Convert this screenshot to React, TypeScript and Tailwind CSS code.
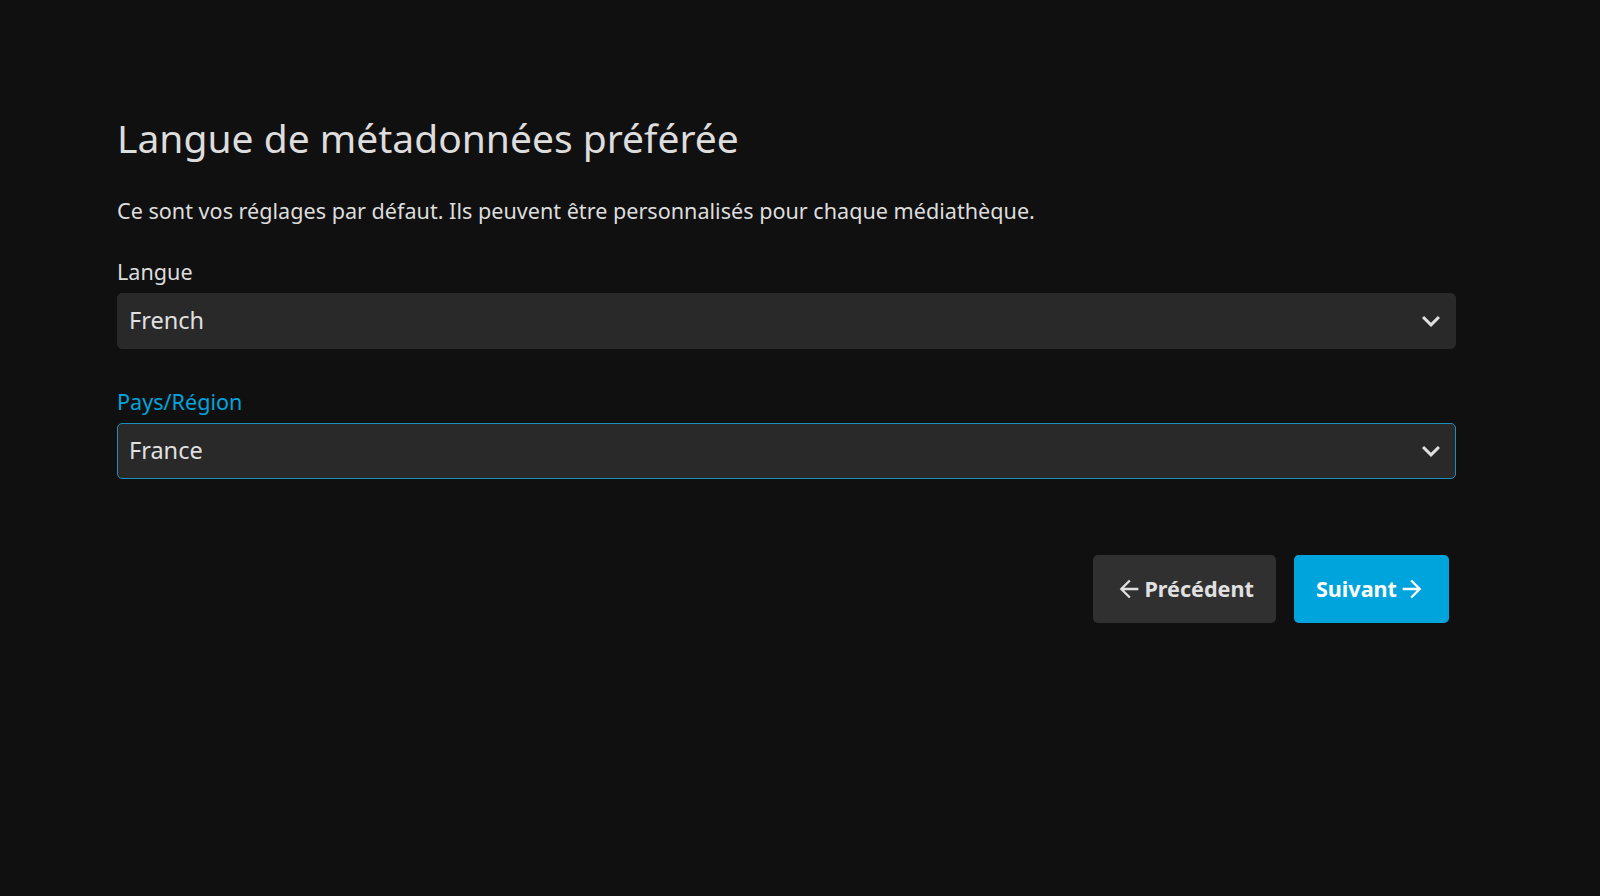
const font = { fontFamily: '"Noto Sans", "Open Sans", sans-serif' };

function Chevron() {
  return (
    <svg viewBox="0 0 24 24" className="h-[36px] w-[36px] fill-[#e0e0e0]">
      <path d="M16.59 8.59L12 13.17 7.41 8.59 6 10l6 6 6-6z" />
    </svg>
  );
}

function ArrowBack() {
  return (
    <svg viewBox="0 0 24 24" className="h-[28px] w-[28px] fill-current">
      <path d="M20 11H7.83l5.59-5.59L12 4l-8 8 8 8 1.41-1.41L7.83 13H20v-2z" />
    </svg>
  );
}

function ArrowForward() {
  return (
    <svg viewBox="0 0 24 24" className="h-[28px] w-[28px] fill-current">
      <path d="M12 4l-1.41 1.41L16.17 11H4v2h12.17l-5.58 5.59L12 20l8-8z" />
    </svg>
  );
}

function SelectField({ label, value, focused }: { label: string; value: string; focused?: boolean }) {
  return (
    <div className="flex flex-col">
      <label className={`text-[21.6px] leading-[30px] ${focused ? "text-[#00a4dc]" : "text-[#dddddd]"}`}>{label}</label>
      <div
        className={`mt-[6px] flex h-[56px] items-center justify-between rounded-[5px] border bg-[#292929] pl-[11px] pr-[6px] ${
          focused ? "border-[#1c8fba]" : "border-[#292929]"
        }`}
      >
        <span className="text-[23.5px] text-[#e0e0e0]">{value}</span>
        <Chevron />
      </div>
    </div>
  );
}

export default function App() {
  return (
    <div className="min-h-[896px] w-full bg-[#101010]" style={font}>
      <div className="ml-[117px] w-[1339px] pt-[112px]">
        <h1 className="text-[39px] leading-[52px] text-[#dddddd]">Langue de métadonnées préférée</h1>
        <p className="mt-[31px] text-[21.6px] leading-[32px] text-[#dddddd]">
          Ce sont vos réglages par défaut. Ils peuvent être personnalisés pour chaque médiathèque.
        </p>
        <div className="mt-[30px] flex flex-col gap-[38px]">
          <SelectField label="Langue" value="French" />
          <SelectField label="Pays/Région" value="France" focused />
        </div>
        <div className="mr-[7px] mt-[76px] flex justify-end gap-[18px]">
          <button className="flex h-[68px] items-center gap-[1px] rounded-[5px] bg-[#303030] pl-[22px] pr-[22px] text-[21.6px] font-bold text-[#e0e0e0]">
            <ArrowBack />
            Précédent
          </button>
          <button className="flex h-[68px] items-center gap-[1px] rounded-[5px] bg-[#00a4dc] pl-[22px] pr-[23px] text-[21.6px] font-bold text-white">
            Suivant
            <ArrowForward />
          </button>
        </div>
      </div>
    </div>
  );
}
